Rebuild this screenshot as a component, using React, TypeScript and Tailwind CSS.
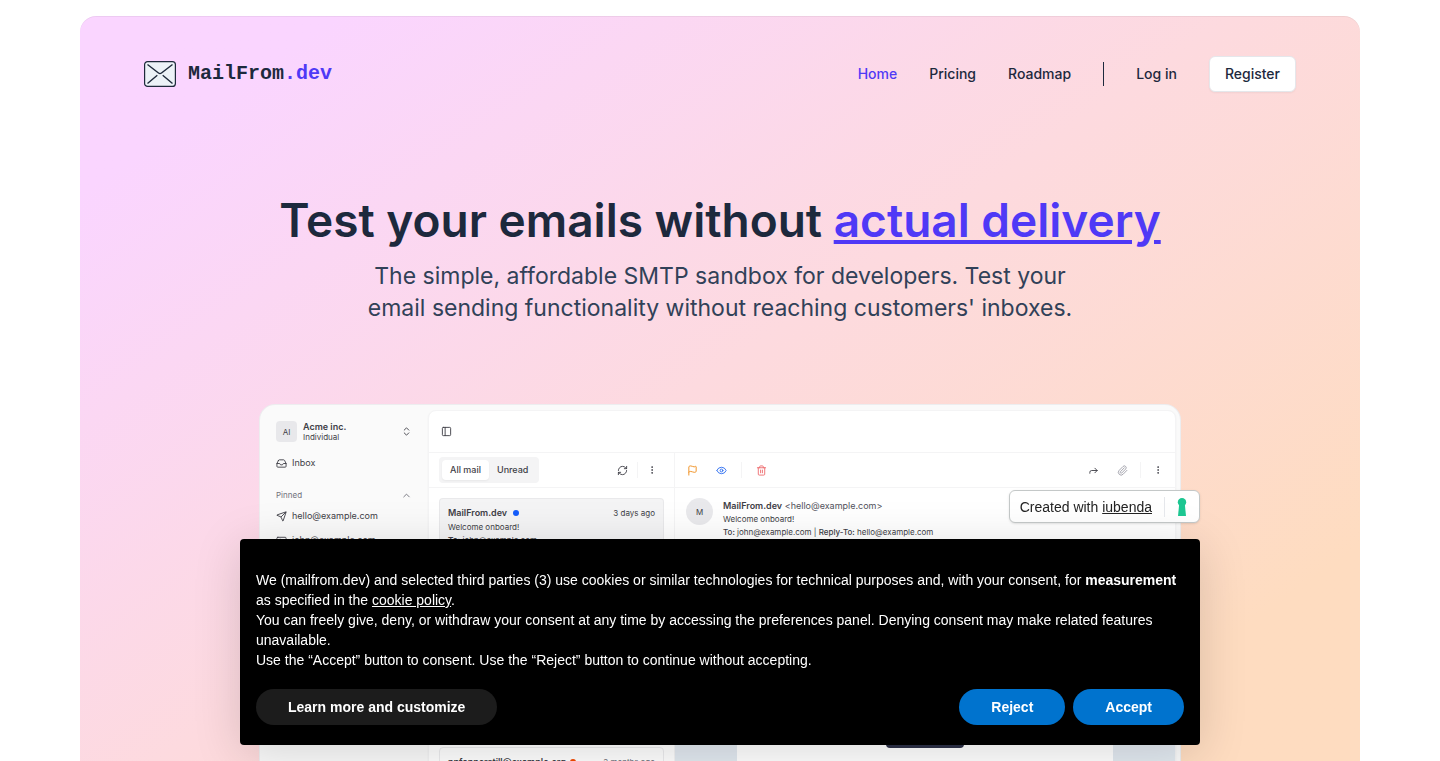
import {
  ChevronUp,
  ChevronsUpDown,
  EllipsisVertical,
  Eye,
  Flag,
  Forward,
  Inbox,
  IdCard,
  PanelLeft,
  Paperclip,
  RefreshCw,
  Send,
  Trash2,
} from "lucide-react";

const navLinks = [
  { label: "Home", active: true },
  { label: "Pricing", active: false },
  { label: "Roadmap", active: false },
];

// ----- LOGO -----

function Logo() {
  return (
    <a href="#" className="flex items-center gap-3">
      <svg width="32" height="26" viewBox="0 0 32 26" fill="none" stroke="#1e293b">
        <rect x="0.6" y="0.6" width="30.8" height="24.8" rx="3" fill="#ecf2f7" strokeWidth="1.2" />
        <path d="M3.5 3.5 L14.5 12 Q16 13.2 17.5 12 L28.5 3.5 M3.5 22.5 L13.3 14.3 M28.5 22.5 L18.7 14.3" strokeWidth="1.4" />
      </svg>
      <span className="font-['Liberation_Mono',monospace] text-xl leading-6 font-bold text-slate-800">
        MailFrom<span className="text-[#4f39f6]">.dev</span>
      </span>
    </a>
  );
}

// ----- HEADER -----

function Header() {
  return (
    <header className="flex items-center justify-between">
      <Logo />
      <nav className="flex items-center gap-8 text-sm font-medium text-slate-800">
        {navLinks.map((l) => (
          <a key={l.label} href="#" className={l.active ? "text-[#4f39f6]" : ""}>
            {l.label}
          </a>
        ))}
        <span className="h-6 w-px bg-slate-800" />
        <a href="#">Log in</a>
        <a href="#" className="flex h-9 items-center rounded-md border border-gray-200 bg-white px-[15px] shadow-xs">
          Register
        </a>
      </nav>
    </header>
  );
}

// ----- APP PREVIEW -----

function Sidebar() {
  return (
    <aside className="w-[168px] shrink-0 px-4 pt-4 text-[9px] text-zinc-700">
      <div className="flex h-[21px] items-center">
        <span className="flex size-[21px] items-center justify-center rounded bg-zinc-200/80 text-[8px]">AI</span>
        <div className="ml-[6px] flex-1">
          <p className="leading-[11px] font-semibold">Acme inc.</p>
          <p className="text-[8px] leading-[10px]">Individual</p>
        </div>
        <ChevronsUpDown size={11} />
      </div>
      <a href="#" className="mt-[11px] flex h-5 items-center gap-[5px]">
        <Inbox size={11} />
        Inbox
      </a>
      <div className="mt-3 flex h-5 items-center justify-between text-[8px] text-zinc-500">
        Pinned
        <ChevronUp size={11} />
      </div>
      <a href="#" className="mt-px flex h-5 items-center gap-[5px]">
        <Send size={11} />
        hello@example.com
      </a>
      <a href="#" className="mt-1 flex h-5 items-center gap-[5px]">
        <IdCard size={11} />
        john@example.com
      </a>
    </aside>
  );
}

function MailList() {
  return (
    <section className="w-[246px] shrink-0 border-r border-zinc-100 text-zinc-700">
      <div className="flex h-[35px] items-center border-b border-zinc-100 pr-[17px] pl-[10px]">
        <div className="flex h-[26px] items-center rounded bg-zinc-100 p-[3px] text-[9px] font-medium">
          <button className="h-5 rounded-sm bg-white px-2 shadow-xs">All mail</button>
          <button className="h-5 px-2">Unread</button>
        </div>
        <RefreshCw size={11} className="ml-auto" />
        <span className="mx-[9px] h-4 w-px bg-zinc-100" />
        <EllipsisVertical size={10} />
      </div>
      <ul className="flex flex-col gap-[9px] p-[10px]">
        <li className="h-[74px] rounded border border-zinc-200/70 bg-zinc-100 px-2 pt-[7px] text-[8px]">
          <p className="flex h-[13px] items-center text-[9px] font-semibold">
            MailFrom.dev
            <span className="ml-[6px] size-[6px] rounded-full bg-[#155dfc]" />
            <span className="ml-auto text-[8px] font-normal">3 days ago</span>
          </p>
          <p className="leading-4">Welcome onboard!</p>
          <p className="leading-[10px]">
            <b>To:</b> john@example.com
          </p>
        </li>
        <li className="h-[74px] rounded border border-zinc-200/70" />
        <li className="h-[74px] rounded border border-zinc-200/70" />
        <li className="h-[74px] rounded border border-zinc-200/70 px-2 pt-[7px]">
          <p className="flex h-[13px] items-center text-[9px] font-semibold">
            npfannerstill@example.org
            <span className="ml-1 size-[6px] rounded-full bg-[#f54900]" />
            <span className="ml-auto text-[8px] font-normal text-zinc-500">3 months ago</span>
          </p>
        </li>
      </ul>
    </section>
  );
}

function MailDetail() {
  return (
    <section className="flex min-w-0 flex-1 flex-col text-zinc-700">
      <div className="flex h-[35px] items-center border-b border-zinc-100 px-3">
        <Flag size={11} className="text-[#f08c1a]" />
        <Eye size={11} className="ml-[18px] text-[#2b6cf0]" />
        <span className="mx-[14px] h-4 w-px bg-zinc-100" />
        <Trash2 size={11} className="text-[#ee6b6e]" />
        <Forward size={11} className="ml-auto" />
        <Paperclip size={11} className="ml-[18px] text-zinc-400" />
        <span className="mx-3 h-4 w-px bg-zinc-100" />
        <EllipsisVertical size={10} />
      </div>
      <div className="flex h-[74px] gap-[10px] px-[11px] pt-[10px]">
        <span className="flex size-[27px] items-center justify-center rounded-full bg-zinc-200/80 text-[8px]">M</span>
        <div className="text-[8px]">
          <p className="text-[9px] leading-[15px]">
            <b className="font-semibold">MailFrom.dev</b> <span className="text-zinc-600">&lt;hello@example.com&gt;</span>
          </p>
          <p className="leading-[13px]">Welcome onboard!</p>
          <p className="leading-[13px]">
            <span className="font-medium">To:</span> john@example.com | <span className="font-medium">Reply-To:</span>{" "}
            hello@example.com
          </p>
        </div>
      </div>
      <div className="flex flex-1 bg-[#e2e9f0] px-[62px]">
        <div className="flex flex-1 justify-center bg-white pt-40">
          <span className="h-[26px] w-[78px] rounded-sm bg-[#2d3148]" />
        </div>
      </div>
    </section>
  );
}

function AppPreview() {
  return (
    <div className="mx-auto flex w-full max-w-[922px] rounded-2xl border border-zinc-200/60 bg-zinc-50 pr-1 pb-1 text-left">
      <Sidebar />
      <div className="mt-[5px] min-w-0 flex-1 overflow-hidden rounded-lg border border-zinc-100 bg-white shadow-xs">
        <div className="flex h-[42px] items-center border-b border-zinc-100 px-3 text-zinc-700">
          <PanelLeft size={11} />
        </div>
        <div className="flex">
          <MailList />
          <MailDetail />
        </div>
      </div>
    </div>
  );
}

// ----- COOKIE BANNER -----

function CookieBanner() {
  return (
    <div className="fixed inset-x-4 bottom-4 mx-auto max-w-[960px] font-['Liberation_Sans',sans-serif] text-sm">
      <div className="mb-4 ml-auto flex h-[33px] w-fit items-center rounded-md border border-[#c4c8c8] bg-white px-[10px] text-[#222] shadow-sm">
        <span>
          Created with{" "}
          <a href="#" className="underline">
            iubenda
          </a>
        </span>
        <span className="mx-3 h-5 w-px bg-gray-200" />
        <svg width="10" height="18" viewBox="0 0 10 18" className="mr-[2px]" fill="#1cc691">
          <circle cx="5" cy="4.2" r="4.2" />
          <path d="M2.2 6H7.8L9 18H1Z" />
        </svg>
      </div>
      <div className="rounded bg-black px-4 pt-[31px] pb-5 text-white shadow-[0_8px_48px_rgba(0,0,0,0.15)]">
        <div className="leading-5">
          <p>
            We (mailfrom.dev) and selected third parties (3) use cookies or similar technologies for technical purposes
            and, with your consent, for <b>measurement</b> as specified in the{" "}
            <a href="#" className="underline">
              cookie policy
            </a>
            .
          </p>
          <p>
            You can freely give, deny, or withdraw your consent at any time by accessing the preferences panel. Denying
            consent may make related features unavailable.
          </p>
          <p>Use the “Accept” button to consent. Use the “Reject” button to continue without accepting.</p>
        </div>
        <div className="mt-[19px] flex gap-2 font-bold">
          <button className="mr-auto h-9 rounded-full bg-[#1c1c1c] px-8">Learn more and customize</button>
          <button className="h-9 rounded-full bg-[#0073ce] px-8">Reject</button>
          <button className="h-9 rounded-full bg-[#0073ce] px-8">Accept</button>
        </div>
      </div>
    </div>
  );
}

export default function App() {
  return (
    <div className="bg-white pt-4 font-['Inter',sans-serif]">
      <main className="mx-auto max-w-7xl rounded-2xl bg-linear-to-br from-[#fad5ff] from-10% via-[#fddadf] via-45% to-[#fedcc0] to-80% px-16 pt-10 pb-16 shadow-[inset_0_1px_0_rgba(0,0,0,0.05)]">
        <Header />
        <section className="mt-[104px] text-center">
          <h1 className="text-[46px] leading-12 font-semibold text-slate-800">
            Test your emails without{" "}
            <a href="#" className="text-[#4f39f6] underline">
              actual delivery
            </a>
          </h1>
          <p className="mx-auto mt-4 max-w-[740px] text-[23px] leading-8 text-slate-700">
            The simple, affordable SMTP sandbox for developers. Test your email sending functionality without reaching
            customers' inboxes.
          </p>
        </section>
        <div className="mt-20">
          <AppPreview />
        </div>
      </main>
      <CookieBanner />
    </div>
  );
}
